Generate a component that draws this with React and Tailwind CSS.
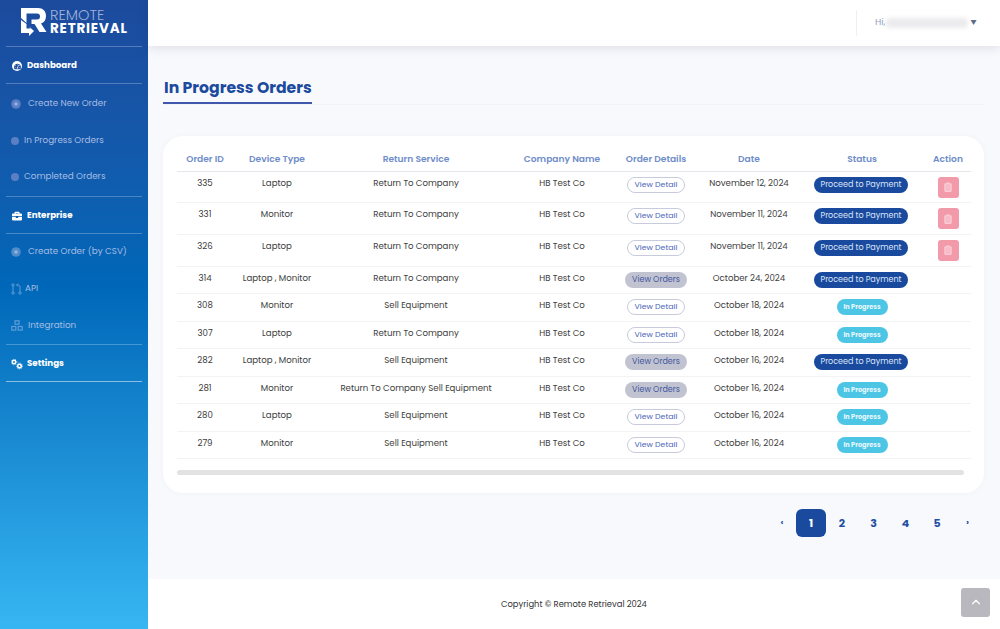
import React from 'react';
import { ChevronUp } from 'lucide-react';
import { FaBriefcase, FaTachometerAlt } from 'react-icons/fa';

const orders = [
  { id: 335, device: 'Laptop', service: 'Return To Company', details: 'detail', date: 'November 12, 2024', status: 'pay', del: true },
  { id: 331, device: 'Monitor', service: 'Return To Company', details: 'detail', date: 'November 11, 2024', status: 'pay', del: true },
  { id: 326, device: 'Laptop', service: 'Return To Company', details: 'detail', date: 'November 11, 2024', status: 'pay', del: true },
  { id: 314, device: 'Laptop , Monitor', service: 'Return To Company', details: 'orders', date: 'October 24, 2024', status: 'pay' },
  { id: 308, device: 'Monitor', service: 'Sell Equipment', details: 'detail', date: 'October 18, 2024', status: 'progress' },
  { id: 307, device: 'Laptop', service: 'Return To Company', details: 'detail', date: 'October 18, 2024', status: 'progress' },
  { id: 282, device: 'Laptop , Monitor', service: 'Sell Equipment', details: 'orders', date: 'October 16, 2024', status: 'pay' },
  { id: 281, device: 'Monitor', service: 'Return To Company Sell Equipment', details: 'orders', date: 'October 16, 2024', status: 'progress' },
  { id: 280, device: 'Laptop', service: 'Sell Equipment', details: 'detail', date: 'October 16, 2024', status: 'progress' },
  { id: 279, device: 'Monitor', service: 'Sell Equipment', details: 'detail', date: 'October 16, 2024', status: 'progress' },
];

const Dot = () => <span className="block w-[8px] h-[8px] rounded-full bg-[#5b7fc4]" />;

const PlusDot = ({ color }) => (
  <svg width="10" height="10" viewBox="0 0 10 10">
    <circle cx="5" cy="5" r="4.800" fill={color} />
    <path d="M5 3v4M3 5h4" stroke="#a9bfe6" strokeWidth="1" />
  </svg>
);

const ApiIcon = () => (
  <svg width="11" height="12" viewBox="0 0 11 12" fill="none" stroke="#5f9cd8" strokeWidth="1">
    <circle cx="2" cy="2" r="1.200" />
    <circle cx="2" cy="10" r="1.200" />
    <circle cx="9" cy="10" r="1.200" />
    <path d="M2 3.200v5.600M9 8.800V3.500Q9 2 7.500 2H6M7 .5 5.500 2 7 3.500" />
  </svg>
);

const IntegrationIcon = () => (
  <svg width="12" height="11" viewBox="0 0 12 11" fill="none" stroke="#5f9cd8" strokeWidth="1.200">
    <rect x="4" y="0.800" width="4" height="3.400" />
    <rect x="0.800" y="6.500" width="4" height="3.600" />
    <rect x="7.200" y="6.500" width="4" height="3.600" />
  </svg>
);

const GearsIcon = () => (
  <svg width="12" height="11" viewBox="0 0 12 11" fill="none" stroke="white">
    <circle cx="3" cy="3" r="1.700" strokeWidth="1.500" />
    <circle cx="3" cy="3" r="2.800" strokeWidth="0.700" strokeDasharray="1 1" />
    <circle cx="8.500" cy="7" r="1.800" strokeWidth="1.500" />
    <circle cx="8.500" cy="7" r="3" strokeWidth="0.700" strokeDasharray="1 1" />
  </svg>
);

const TrashIcon = () => (
  <svg width="8" height="10" viewBox="0 0 10 12">
    <path d="M3.500 .8h3v1.200H9v9.200a.6.6 0 0 1-.6.6H1.600a.6.6 0 0 1-.6-.6V2h2.500z" fill="#f7bcc8" stroke="#fbdde3" strokeWidth="0.900" />
  </svg>
);

const Logo = () => (
  <div className="flex items-center h-[46px] pl-[21px] pb-[3px]">
    <svg width="26" height="30" viewBox="0 0 26 30" fill="white">
      <path d="M0 1h17c5 0 8 3 8 8 0 4-2 6.500-5 7.500l5.500 8.500h-7l-5-8h-3v-4.500h5.500c2 0 3-1 3-3s-1-3-3-3H5.500v9.500L0 11z" />
      <path d="M0 13l5.500 4v4.500h4l-1.500-2 5 4.500-5 5 0-3H0z" />
    </svg>
    <div className="ml-[3px] mt-[1px] flex flex-col">
      <span className="text-[14.500px] leading-[13px] font-light text-[#9fb1d8]">REMOTE</span>
      <span className="text-[13.500px] leading-[13px] tracking-[0.8px] font-bold text-white">RETRIEVAL</span>
    </div>
  </div>
);

const Line = () => <div className="h-px mx-[6px] bg-white/25" />;

const Head = ({ icon, label }) => (
  <div className="flex items-center h-[36px] pt-[2px] pl-[11px] gap-[4px] text-[8.700px] font-bold text-white">
    <span className="w-[12px] flex justify-center">{icon}</span>
    {label}
  </div>
);

const Sub = ({ icon, label, gap, pad, h }) => (
  <div className={`flex items-center ${h} ${pad} ${gap} text-[8.800px] text-[#a5bde4]`}>
    {icon}
    {label}
  </div>
);

function Sidebar() {
  return (
    <aside className="w-[148px] shrink-0 bg-gradient-to-b from-[#1c4a9d] via-[#0067b8] via-45% to-[#36b6f2]">
      <Logo />
      <Line />
      <Head icon={<span className="flex items-center justify-center w-[10px] h-[10px] rounded-full bg-white"><FaTachometerAlt className="text-[#1c4a9d]" size={7} /></span>} label="Dashboard" />
      <Line />
      <Sub h="h-[39px] pt-[1px]" pad="pl-[11px]" gap="gap-[7px]" icon={<PlusDot color="#5b7fc4" />} label="Create New Order" />
      <Sub h="h-[35px]" pad="pl-[11px]" gap="gap-[5px]" icon={<Dot />} label="In Progress Orders" />
      <Sub h="h-[38px]" pad="pl-[11px]" gap="gap-[5px]" icon={<Dot />} label="Completed Orders" />
      <Line />
      <Head icon={<FaBriefcase size={10} color="white" />} label="Enterprise" />
      <Line />
      <Sub h="h-[36px]" pad="pl-[11px]" gap="gap-[7px]" icon={<PlusDot color="#4f8cc9" />} label="Create Order (by CSV)" />
      <Sub h="h-[37px]" pad="pl-[11px]" gap="gap-[3px]" icon={<ApiIcon />} label="API" />
      <Sub h="h-[37px]" pad="pl-[11px]" gap="gap-[5px]" icon={<IntegrationIcon />} label="Integration" />
      <Line />
      <Head icon={<GearsIcon />} label="Settings" />
      <div className="h-px mx-[6px] bg-white/50" />
    </aside>
  );
}

function Topbar() {
  return (
    <header className="h-[46px] shrink-0 bg-white shadow-[0_2px_10px_rgba(40,40,70,0.12)] flex justify-end relative z-10">
      <div className="mt-[10px] h-[26px] w-[144px] border-l border-[#eef0f6] flex items-center pl-[18px] text-[9px] text-[#8f9fc0]">
        Hi,
        <span className="ml-[1px] block w-[82px] h-[10px] rounded-sm bg-[#ebebee] blur-[2px]" />
        <span className="ml-[2px] text-[6.500px] text-[#5e6b85]">▼</span>
      </div>
    </header>
  );
}

const ViewButton = ({ type }) =>
  type === 'detail' ? (
    <span className="block mx-auto w-[58px] h-[16px] leading-[14px] rounded-full border border-[#c8cbdc] bg-white text-[7.800px] text-[#4a66b8]">View Detail</span>
  ) : (
    <span className="block mx-auto w-[62px] h-[16px] leading-[16px] rounded-full bg-[#c2c3d1] text-[8px] text-[#3f57a0]">View Orders</span>
  );

const StatusBadge = ({ status }) =>
  status === 'pay' ? (
    <span className="block ml-[15px] w-[94px] h-[16px] leading-[16px] rounded-full bg-[#1a4a9e] text-[8px] text-[#dbe4f7]">Proceed to Payment</span>
  ) : (
    <span className="block mx-auto w-[51px] h-[16px] leading-[16px] rounded-full bg-[#4dc6e6] text-[6.500px] font-bold text-[#e8f8fd]">In Progress</span>
  );

function OrdersTable() {
  return (
    <table className="w-[794px] table-fixed border-collapse text-center text-[8.600px] leading-[12px] text-[#3c3c3c]">
      <colgroup>
        <col className="w-[56px]" />
        <col className="w-[88px]" />
        <col className="w-[190px]" />
        <col className="w-[102px]" />
        <col className="w-[86px]" />
        <col className="w-[100px]" />
        <col className="w-[126px]" />
        <col className="w-[46px]" />
      </colgroup>
      <thead>
        <tr className="h-[23px] border-b border-[#e6e7ec] text-[9.100px] text-[#6f8dc9]">
          <th className="font-semibold">Order ID</th>
          <th className="font-semibold">Device Type</th>
          <th className="font-semibold">Return Service</th>
          <th className="font-semibold">Company Name</th>
          <th className="font-semibold">Order Details</th>
          <th className="font-semibold">Date</th>
          <th className="font-semibold">Status</th>
          <th className="font-semibold">Action</th>
        </tr>
      </thead>
      <tbody>
        {orders.map((o) => (
          <tr key={o.id} className={`align-top border-b border-[#f3f3f6] ${o.del ? 'h-[31.700px]' : 'h-[27.500px]'}`}>
            <td className="pt-[5px]">{o.id}</td>
            <td className="pt-[5px]">{o.device}</td>
            <td className="pt-[5px]">{o.service}</td>
            <td className="pt-[5px]">HB Test Co</td>
            <td className="pt-[5px]"><ViewButton type={o.details} /></td>
            <td className="pt-[5px]">{o.date}</td>
            <td className="pt-[5px]"><StatusBadge status={o.status} /></td>
            <td className="pt-[5px]">
              {o.del && (
                <span className="mx-auto flex items-center justify-center w-[21px] h-[21px] rounded-[3px] bg-[#f29aaa]">
                  <TrashIcon />
                </span>
              )}
            </td>
          </tr>
        ))}
      </tbody>
    </table>
  );
}

function Pagination() {
  return (
    <div className="flex items-center justify-end h-[28px] mt-[16px] mr-[2px] text-[11px] font-bold text-[#1f4fa3]">
      <span className="w-[28px] text-center text-[9px]">‹</span>
      <span className="w-[30px] h-[28px] leading-[28px] text-center rounded-[6px] bg-[#1a4a9e] text-white">1</span>
      {[2, 3, 4, 5].map((n) => (
        <span key={n} className="w-[31.750px] text-center">{n}</span>
      ))}
      <span className="w-[29px] text-center text-[9px]">›</span>
    </div>
  );
}

export default function App() {
  return (
    <div className="flex h-[629px] w-[1000px] overflow-hidden bg-[#f8f9fd] font-['Poppins','Inter',sans-serif]">
      <Sidebar />
      <div className="flex-1 flex flex-col min-w-0">
        <Topbar />
        <main className="flex-1 pl-[15px] pr-[16px] pt-[29px]">
          <div className="border-b border-[#f1f2f8]">
            <h1 className="inline-block h-[29px] leading-[26px] pl-px border-b-[2px] border-[#3f57ad] text-[15.700px] font-bold text-[#1c4a9d]">In Progress Orders</h1>
          </div>
          <section className="mt-[31px] h-[357px] rounded-[20px] bg-white pl-[14px] pt-[12px] shadow-[0_0_6px_rgba(60,60,100,0.03)]">
            <OrdersTable />
            <div className="mt-[11px] w-[787px] h-[5px] rounded-full bg-[#e2e2e2]" />
          </section>
          <Pagination />
        </main>
        <footer className="h-[50px] shrink-0 bg-white flex items-center pl-[353px] pr-[10px] justify-between text-[8.400px] text-[#333]">
          <span>Copyright © Remote Retrieval 2024</span>
          <span className="w-[29px] h-[29px] rounded-[3px] bg-[#b9b8be] flex items-center justify-center mt-[-4px]">
            <ChevronUp size={14} color="white" />
          </span>
        </footer>
      </div>
    </div>
  );
}
